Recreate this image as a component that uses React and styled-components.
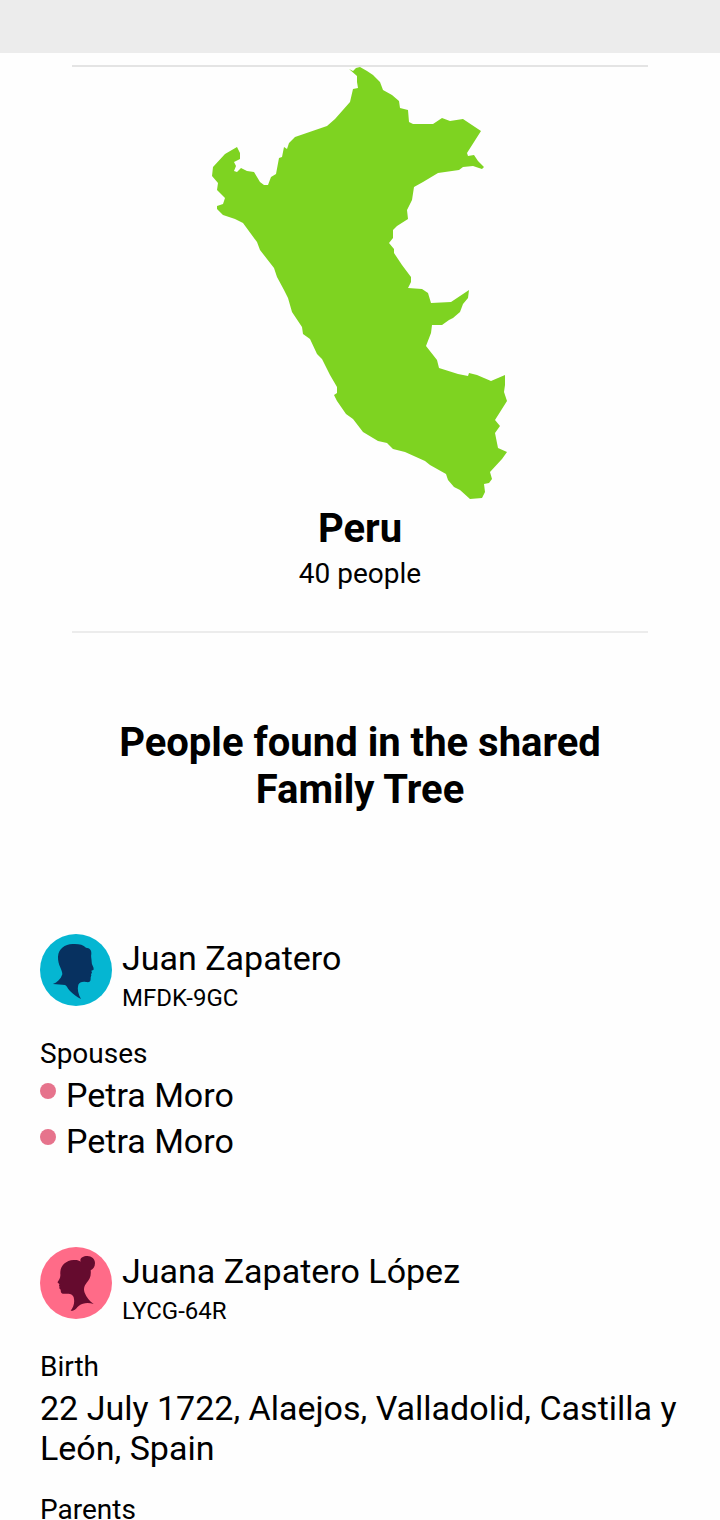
import styled, { createGlobalStyle } from "styled-components";

const GlobalStyle = createGlobalStyle`
  * {
    box-sizing: border-box;
  }
  body {
    margin: 0;
    background: #fefefe;
    color: #000;
    font-family: Roboto, "Liberation Sans", sans-serif;
  }
`;

const StatusBar = styled.div`
  height: 53px;
  background: #ececec;
`;

const Summary = styled.section`
  margin: 12px 10% 0;
  border-top: 2px solid #e4e4e4;
  border-bottom: 2px solid #ececec;
  padding-bottom: 39px;
  text-align: center;
`;

const CountryMap = styled.svg`
  display: block;
  width: 320px;
  height: 434px;
  margin: 0 auto;
`;

const Country = styled.h1`
  margin: 4px 0 0;
  font-size: 40px;
  font-weight: 700;
  line-height: 48px;
`;

const Count = styled.p`
  margin: 3px 0 0;
  font-size: 28px;
  line-height: 36px;
`;

const Heading = styled.h2`
  margin: 86px auto 0;
  padding: 0 80px;
  font-size: 40px;
  font-weight: 700;
  line-height: 47px;
  text-align: center;
`;

const People = styled.main`
  display: flex;
  flex-direction: column;
  gap: 86px;
  padding: 121px 40px 0;
`;

const Person = styled.article`
  display: flex;
  flex-direction: column;
`;

const PersonHeader = styled.header`
  display: flex;
  gap: 10px;
`;

const Avatar = styled.svg`
  flex: none;
  width: 72px;
  height: 72px;
`;

const Name = styled.h3`
  margin: 4px 0 0;
  font-size: 34px;
  font-weight: 400;
  line-height: 40px;
`;

const PersonId = styled.p`
  margin: 6px 0 0;
  font-size: 24px;
  line-height: 28px;
`;

const Label = styled.h4`
  margin: 24px 0 0;
  font-size: 28px;
  font-weight: 400;
  line-height: 36px;
`;

const Value = styled.p`
  margin: 3px 0 0;
  font-size: 34px;
  line-height: 40px;
`;

const SpouseList = styled.ul`
  display: flex;
  flex-direction: column;
  gap: 6px;
  margin: 3px 0 0;
  padding: 0;
  list-style: none;
`;

const Spouse = styled.li`
  display: flex;
  gap: 10px;
  font-size: 34px;
  line-height: 40px;

  &::before {
    content: "";
    width: 16px;
    height: 16px;
    margin-top: 8px;
    border-radius: 50%;
    background: #e6738c;
  }
`;

const PERU =
  "M349 69 L353 71 L356 68 L360 67 L367 71 L373 75 L380 82 L383 90 L392 95 L399 101 L400 108 L408 110 L409 122 L413 124 L433 124 L442 118 L450 121 L463 119 L472 125 L481 131 L467 153 L468 156 L474 155 L478 161 L484 167 L482 169 L473 166 L463 167 L459 170 L438 173 L423 182 L414 187 L412 200 L407 210 L408 219 L397 226 L393 230 L393 238 L389 243 L394 249 L394 253 L402 265 L411 277 L411 282 L408 288 L422 289 L428 293 L431 303 L451 302 L460 296 L469 290 L468 298 L463 304 L460 312 L453 318 L449 320 L442 325 L432 325 L431 333 L426 346 L437 360 L439 368 L458 374 L468 376 L469 373 L477 375 L491 381 L505 375 L505 385 L504 392 L507 401 L495 420 L500 426 L495 433 L498 448 L507 452 L502 459 L490 472 L492 479 L489 483 L484 484 L485 492 L482 498 L470 499 L460 490 L454 487 L448 480 L446 474 L430 465 L425 461 L405 452 L393 449 L387 443 L378 441 L363 432 L353 419 L346 414 L337 401 L334 395 L337 393 L337 387 L330 375 L322 359 L317 354 L310 339 L303 334 L302 327 L292 312 L288 298 L284 290 L277 277 L274 268 L260 250 L257 242 L243 223 L235 219 L223 215 L217 209 L217 206 L223 204 L225 198 L217 190 L218 183 L212 176 L213 167 L225 154 L237 147 L240 153 L240 159 L234 162 L236 166 L234 171 L237 172 L241 168 L247 171 L254 172 L260 182 L264 185 L268 185 L271 177 L276 174 L279 158 L282 157 L284 147 L287 149 L289 143 L295 137 L327 126 L335 119 L350 102 L353 89 L358 88 L357 82 L357 76 Z";

const ManIcon = () => (
  <Avatar viewBox="0 0 216 216" aria-hidden="true">
    <circle cx="108" cy="108" r="108" fill="#05b6d2" />
    <path
      fill="#073160"
      d="M54 68 C56 44 74 31 98 30 C116 29 129 32 138 41 C149 42 155 48 154 59 C152 68 155 74 155 83 C154 91 162 99 161 106 C161 110 155 109 154 111 C157 115 156 118 153 120 C156 125 151 128 152 134 C152 145 146 145 138 144 C126 142 118 146 115 152 C111 166 115 180 123 195 C112 190 99 180 90 171 C82 162 80 155 75 153 C65 151 52 152 39 150 C52 145 62 136 67 121 C68 107 53 94 54 68 Z"
    />
  </Avatar>
);

const WomanIcon = () => (
  <Avatar viewBox="0 0 216 216" aria-hidden="true">
    <circle cx="108" cy="108" r="108" fill="#ff6b88" />
    <path
      fill="#650b2e"
      d="M61 82 C59 58 76 40 101 39 C110 38 117 40 122 44 C118 34 128 27 142 27 C155 27 165 36 165 48 C165 60 159 67 152 70 C154 87 149 97 140 107 C132 117 130 126 134 137 C139 151 149 162 161 171 C146 166 128 167 117 176 C109 182 106 192 92 191 C101 179 105 166 101 151 C97 138 83 140 68 140 C60 138 64 131 61 127 C56 124 59 121 58 118 C55 115 59 114 58 111 C55 109 52 108 53 105 C57 99 62 93 61 82 Z"
    />
  </Avatar>
);

const App = () => {
  return (
    <>
      <GlobalStyle />
      <StatusBar />
      <Summary>
        <CountryMap viewBox="200 67 320 434" role="img" aria-label="Peru">
          <path d={PERU} fill="#7ed321" />
        </CountryMap>
        <Country>Peru</Country>
        <Count>40 people</Count>
      </Summary>
      <Heading>People found in the shared Family Tree</Heading>
      <People>
        <Person>
          <PersonHeader>
            <ManIcon />
            <div>
              <Name>Juan Zapatero</Name>
              <PersonId>MFDK-9GC</PersonId>
            </div>
          </PersonHeader>
          <Label>Spouses</Label>
          <SpouseList>
            <Spouse>Petra Moro</Spouse>
            <Spouse>Petra Moro</Spouse>
          </SpouseList>
        </Person>
        <Person>
          <PersonHeader>
            <WomanIcon />
            <div>
              <Name>Juana Zapatero López</Name>
              <PersonId>LYCG-64R</PersonId>
            </div>
          </PersonHeader>
          <Label>Birth</Label>
          <Value>22 July 1722, Alaejos, Valladolid, Castilla y León, Spain</Value>
          <Label>Parents</Label>
        </Person>
      </People>
    </>
  );
};

export default App;
